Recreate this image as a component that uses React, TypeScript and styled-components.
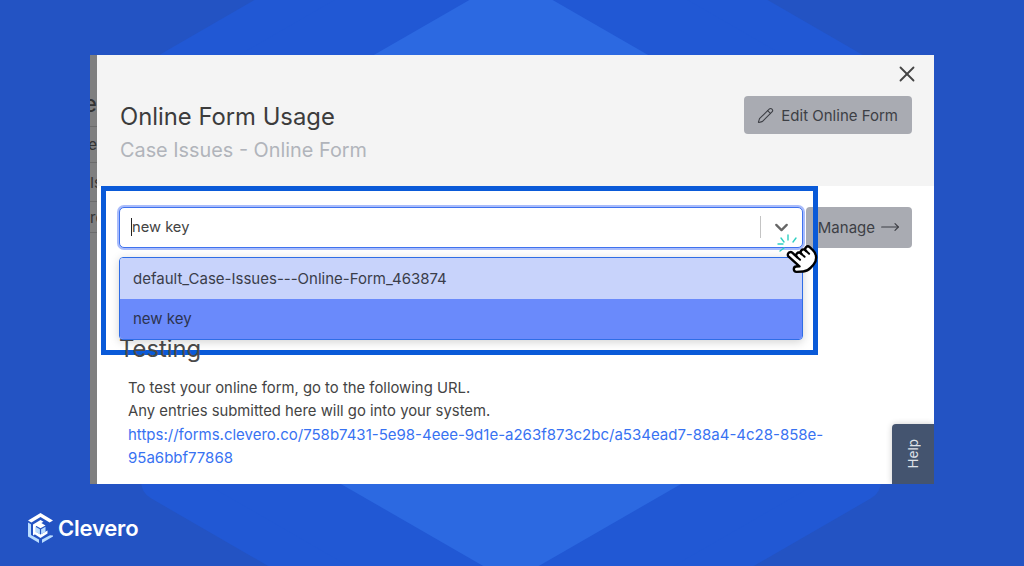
import React from "react";
import styled, { createGlobalStyle } from "styled-components";
import { ChevronDown, MoveRight, Pencil, X } from "lucide-react";

const Global = createGlobalStyle`
  html, body { margin: 0; padding: 0; background: #2353c3; }
  * { box-sizing: border-box; }
`;

const Page = styled.div`
  position: relative;
  width: 1024px;
  height: 566px;
  overflow: hidden;
  background: #2353c3;
  padding: 55px 90px 0;
  font-family: Inter, "Liberation Sans", sans-serif;
`;

const Backdrop = styled.svg`
  position: absolute;
  left: 0;
  top: 0;
`;

const Window = styled.div`
  position: relative;
  display: flex;
  width: 844px;
  height: 429px;
  background: #fff;
  overflow: hidden;
`;

const Strip = styled.div`
  width: 7px;
  flex: none;
  background: #7f7f7f;
  display: flex;
  flex-direction: column;
  overflow: hidden;
  padding-top: 25px;
`;

const StripRow = styled.div<{ $h: number; $big?: boolean; $start?: boolean }>`
  height: ${(p) => p.$h}px;
  flex: none;
  border-bottom: 1px solid #6b6b6b;
  color: #333;
  font-size: ${(p) => (p.$big ? 24 : 15)}px;
  line-height: ${(p) => p.$h}px;
  white-space: nowrap;
  display: flex;
  justify-content: ${(p) => (p.$start ? "flex-start" : "flex-end")};
`;

const Main = styled.div`
  flex: 1;
  display: flex;
  flex-direction: column;
  min-width: 0;
`;

const Header = styled.header`
  height: 131px;
  background: #f4f4f4;
  display: flex;
  justify-content: space-between;
  padding: 0 22px 0 23px;
`;

const Titles = styled.div`
  padding-top: 46px;
`;

const Title = styled.h1`
  margin: 0;
  font-size: 23.8px;
  line-height: 31px;
  font-weight: 400;
  color: #3c3c3c;
`;

const Subtitle = styled.p`
  margin: 5px 0 0;
  font-size: 19.85px;
  line-height: 26px;
  font-weight: 400;
  color: #b1b4bb;
`;

const Actions = styled.div`
  display: flex;
  flex-direction: column;
  align-items: flex-end;
  padding-top: 6px;
`;

const CloseButton = styled.button`
  border: 0;
  background: none;
  padding: 0;
  margin-right: -8px;
  height: 35px;
  width: 26px;
  color: #444;
  display: flex;
  align-items: flex-start;
  justify-content: center;
`;

const GrayButton = styled.button<{ $w: number; $h: number; $pad: number; $gap: number; $lift: number }>`
  width: ${(p) => p.$w}px;
  height: ${(p) => p.$h}px;
  flex: none;
  border: 0;
  border-radius: 4px;
  background: #a9abb2;
  color: #3d3f45;
  font: 400 15px Inter, "Liberation Sans", sans-serif;
  display: flex;
  align-items: center;
  justify-content: flex-end;
  gap: ${(p) => p.$gap}px;
  padding: ${(p) => (p.$lift > 0 ? p.$lift : 0)}px ${(p) => p.$pad}px ${(p) => (p.$lift < 0 ? -p.$lift : 0)}px 0;
`;

const Body = styled.div`
  position: relative;
  flex: 1;
  padding: 21px 22px 0;
`;

const SelectRow = styled.div`
  display: flex;
  gap: 3px;
  height: 41px;
`;

const SelectWrap = styled.div`
  position: relative;
  flex: 1;
  z-index: 3;
`;

const SelectField = styled.div`
  height: 41px;
  border-radius: 5px;
  border: 1px solid #3f72ee;
  box-shadow: 0 0 0 2px #a9bcfb;
  background: #fff;
  display: flex;
  align-items: center;
  padding: 0 0 1px 11px;
  color: #444;
  font-size: 14.7px;
`;

const Caret = styled.span`
  width: 1px;
  height: 18px;
  background: #222;
  flex: none;
`;

const SelectValue = styled.span`
  flex: 1;
`;

const Divider = styled.span`
  width: 1px;
  height: 22px;
  background: #c4c4c4;
`;

const ChevronBox = styled.span`
  width: 41px;
  display: flex;
  justify-content: center;
  color: #666;
`;

const Menu = styled.div`
  position: absolute;
  left: 0;
  right: 0;
  top: 50px;
  border: 1px solid #2f6de6;
  border-radius: 4px;
  overflow: hidden;
  box-shadow: 0 2px 10px rgba(0, 0, 0, 0.18);
`;

const Option = styled.div<{ $active?: boolean }>`
  height: 40.5px;
  background: ${(p) => (p.$active ? "#6a8afb" : "#c8d3fb")};
  color: ${(p) => (p.$active ? "#2c3350" : "#3a3d4a")};
  font-size: 15px;
  padding: ${(p) => (p.$active ? "0" : "1px")} 0 0 13px;
  display: flex;
  align-items: center;
`;

const Testing = styled.h2`
  position: relative;
  z-index: 2;
  margin: 85px 0 0;
  font-size: 23.8px;
  line-height: 32px;
  font-weight: 400;
  color: #4a4a4a;
`;

const Paragraph = styled.p`
  margin: 12px 0 0 9px;
  font-size: 14.85px;
  line-height: 23px;
  color: #444;
`;

const UrlLink = styled.a`
  color: #3872f2;
  font-size: 15px;
  text-decoration: none;
  display: block;
  width: 710px;
`;

const Highlight = styled.div`
  position: absolute;
  left: 11px;
  top: 131px;
  width: 717px;
  height: 169px;
  border: 5px solid #0a5ad8;
  z-index: 1;
  pointer-events: none;
`;

const HelpTab = styled.div`
  position: absolute;
  right: 0;
  bottom: 0;
  width: 42px;
  height: 60px;
  background: #44546f;
  border-top-left-radius: 4px;
  color: #dfe2e8;
  font-size: 13.5px;
  display: flex;
  align-items: center;
  justify-content: center;
  box-shadow: 0 0 6px rgba(0, 0, 0, 0.2);
  z-index: 4;
`;

const HelpLabel = styled.span`
  writing-mode: vertical-rl;
  transform: rotate(180deg);
`;

const CursorMark = styled.svg`
  position: absolute;
  left: 685px;
  top: 175px;
  z-index: 5;
`;

const Brand = styled.div`
  position: absolute;
  left: 27px;
  bottom: 23px;
  display: flex;
  align-items: center;
  gap: 4px;
  color: #fff;
  font-size: 22px;
  font-weight: 600;
  letter-spacing: -0.2px;
`;

const HandPath =
  "M8 2a2 2 0 0 0-2 2v11l-1.76-1.76a2 2 0 0 0-2.83 2.82l3.6 3.6C6.5 21.14 8.2 22 11 22h3a8 8 0 0 0 8-8v-3a2 2 0 0 0-4 0v-1a2 2 0 0 0-4 0V9a2 2 0 0 0-4 0V4a2 2 0 0 0-2-2z";

export default function App() {
  return (
    <>
      <Global />
      <Page>
        <Backdrop width="1024" height="566" viewBox="0 0 1024 566">
          <polygon
            points="511,-125 861,77 861,481 511,683 161,481 161,77"
            fill="#2158d4"
            stroke="#2158d4"
            strokeWidth="40"
            strokeLinejoin="round"
          />
          <polygon points="511,-24 773,127 773,431 511,582 249,431 249,127" fill="#2c69e1" />
        </Backdrop>
        <Window>
          <Strip>
            <StripRow $h={47} $big>
              e
            </StripRow>
            <StripRow $h={36}>e</StripRow>
            <StripRow $h={39} $start>
              Is
            </StripRow>
            <StripRow $h={31} $start>
              ro
            </StripRow>
          </Strip>
          <Main>
            <Header>
              <Titles>
                <Title>Online Form Usage</Title>
                <Subtitle>Case Issues - Online Form</Subtitle>
              </Titles>
              <Actions>
                <CloseButton aria-label="Close">
                  <X size={26} strokeWidth={1.7} />
                </CloseButton>
                <GrayButton $w={168} $h={38} $pad={14} $gap={7} $lift={1}>
                  <Pencil size={17} strokeWidth={1.5} />
                  Edit Online Form
                </GrayButton>
              </Actions>
            </Header>
            <Body>
              <SelectRow>
                <SelectWrap>
                  <SelectField>
                    <Caret />
                    <SelectValue>new key</SelectValue>
                    <Divider />
                    <ChevronBox>
                      <ChevronDown size={21} strokeWidth={2.6} />
                    </ChevronBox>
                  </SelectField>
                  <Menu>
                    <Option>default_Case-Issues---Online-Form_463874</Option>
                    <Option $active>new key</Option>
                  </Menu>
                </SelectWrap>
                <GrayButton $w={106} $h={41} $pad={12} $gap={5} $lift={-1}>
                  Manage
                  <MoveRight size={20} strokeWidth={1.4} />
                </GrayButton>
              </SelectRow>
              <Testing>Testing</Testing>
              <Paragraph>
                To test your online form, go to the following URL.
                <br />
                Any entries submitted here will go into your system.
                <UrlLink>
                  https://forms.clevero.co/758b7431-5e98-4eee-9d1e-a263f873c2bc/a534ead7-88a4-4c28-858e-95a6bbf77868
                </UrlLink>
              </Paragraph>
            </Body>
          </Main>
          <Highlight />
          <HelpTab>
            <HelpLabel>Help</HelpLabel>
          </HelpTab>
          <CursorMark width="50" height="50" viewBox="0 0 50 50">
            <g stroke="#2fd0c2" strokeWidth="1.4" strokeLinecap="round">
              <path d="M13 5v5M6 8l3 4M21 8l-3 4M3 14h5M5 21l4-3" />
            </g>
            <g transform="translate(11 12) scale(1.32) rotate(-48 12 12)">
              <path d={HandPath} fill="#fff" stroke="#000" strokeWidth="1.8" strokeLinejoin="round" />
              <path d="M10 9v3M14 10v3M18 11v3" fill="none" stroke="#000" strokeWidth="1.5" strokeLinecap="round" />
            </g>
          </CursorMark>
        </Window>
        <Brand>
          <svg width="27" height="31" viewBox="0 0 27 31">
            <path d="M1 8.5 13.5 1 26 8.5l-3.4 2L13.5 5 4.4 10.5z" fill="#fff" />
            <path d="M1 10.5l3 1.8v10.6l8 4.7V31L1 24.5z" fill="#b9dcff" />
            <path d="M26 23.5v1L15 31v-3.4l8-4.4z" fill="#b9dcff" />
            <path d="M6 12.5 13.5 8l3 1.8-7.6 4.5v7.4L6 23.5z" fill="#fff" />
            <path d="M6.5 21.5l3-1.5 4 2.4 7-4v3.2L13.5 26z" fill="#fff" />
            <path d="M13.5 10.5 18.5 13.4l-5 2.9-5-2.9z" fill="#fff" />
            <path d="M8.5 14.8l4.4 2.5v5l-4.4-2.6zM14.1 17.3l4.4-2.5v5l-4.4 2.5z" fill="#b9dcff" />
          </svg>
          Clevero
        </Brand>
      </Page>
    </>
  );
}
